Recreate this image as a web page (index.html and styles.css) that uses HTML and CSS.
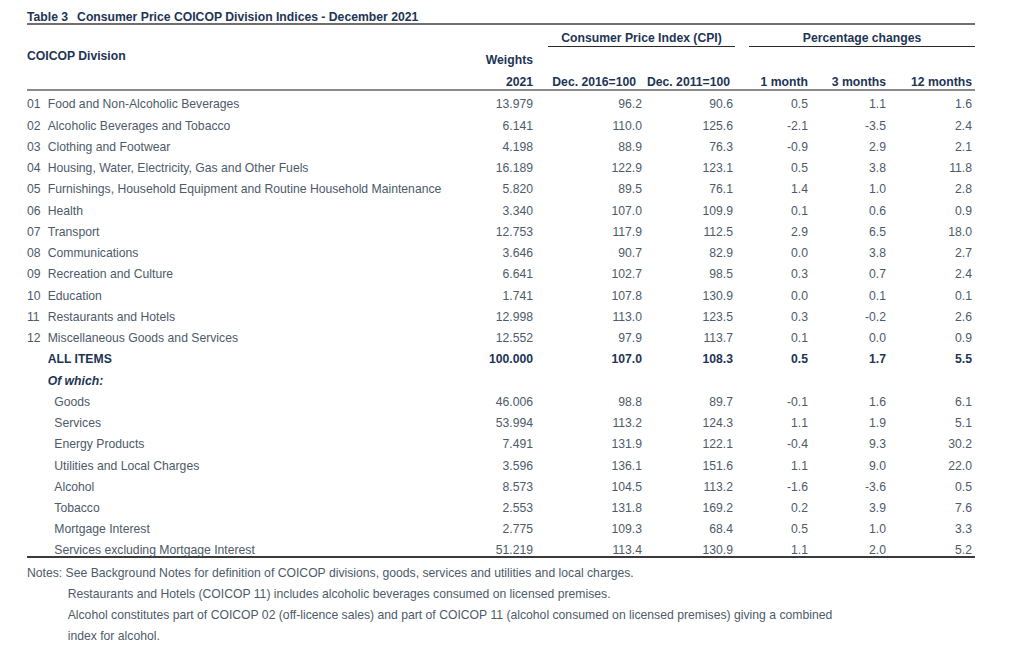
FILE: index.html
```html
<!DOCTYPE html>
<html lang="en">
<head>
<meta charset="utf-8">
<title>Table 3 Consumer Price COICOP Division Indices - December 2021</title>
<link rel="stylesheet" href="styles.css">
</head>
<body>
<div class="page">
  <div class="title">Table 3<span class="gap"></span>Consumer Price COICOP Division Indices - December 2021</div>
  <table class="cpi">
    <colgroup>
      <col class="c-label">
      <col class="c-w">
      <col class="c-d16">
      <col class="c-d11">
      <col class="c-m1">
      <col class="c-m3">
      <col class="c-m12">
    </colgroup>
    <thead>
      <tr class="hr-a">
        <th></th>
        <th></th>
        <th colspan="2"><span class="grp grp-cpi">Consumer Price Index (CPI)</span></th>
        <th colspan="3"><span class="grp grp-pct">Percentage changes</span></th>
      </tr>
      <tr class="hr-b">
        <th class="lbl-head">COICOP Division</th>
        <th class="num w-head">Weights</th>
        <th></th><th></th><th></th><th></th><th></th>
      </tr>
      <tr class="hr-c">
        <th></th>
        <th class="num">2021</th>
        <th class="num d16">Dec. 2016=100</th>
        <th class="num d11">Dec. 2011=100</th>
        <th class="num">1 month</th>
        <th class="num">3 months</th>
        <th class="num last">12 months</th>
      </tr>
    </thead>
    <tbody>
      <tr class="first"><td><span class="code">01</span>Food and Non-Alcoholic Beverages</td><td>13.979</td><td>96.2</td><td>90.6</td><td>0.5</td><td>1.1</td><td>1.6</td></tr>
      <tr><td><span class="code">02</span>Alcoholic Beverages and Tobacco</td><td>6.141</td><td>110.0</td><td>125.6</td><td>-2.1</td><td>-3.5</td><td>2.4</td></tr>
      <tr><td><span class="code">03</span>Clothing and Footwear</td><td>4.198</td><td>88.9</td><td>76.3</td><td>-0.9</td><td>2.9</td><td>2.1</td></tr>
      <tr><td><span class="code">04</span>Housing, Water, Electricity, Gas and Other Fuels</td><td>16.189</td><td>122.9</td><td>123.1</td><td>0.5</td><td>3.8</td><td>11.8</td></tr>
      <tr><td><span class="code">05</span>Furnishings, Household Equipment and Routine Household Maintenance</td><td>5.820</td><td>89.5</td><td>76.1</td><td>1.4</td><td>1.0</td><td>2.8</td></tr>
      <tr><td><span class="code">06</span>Health</td><td>3.340</td><td>107.0</td><td>109.9</td><td>0.1</td><td>0.6</td><td>0.9</td></tr>
      <tr><td><span class="code">07</span>Transport</td><td>12.753</td><td>117.9</td><td>112.5</td><td>2.9</td><td>6.5</td><td>18.0</td></tr>
      <tr><td><span class="code">08</span>Communications</td><td>3.646</td><td>90.7</td><td>82.9</td><td>0.0</td><td>3.8</td><td>2.7</td></tr>
      <tr><td><span class="code">09</span>Recreation and Culture</td><td>6.641</td><td>102.7</td><td>98.5</td><td>0.3</td><td>0.7</td><td>2.4</td></tr>
      <tr><td><span class="code">10</span>Education</td><td>1.741</td><td>107.8</td><td>130.9</td><td>0.0</td><td>0.1</td><td>0.1</td></tr>
      <tr><td><span class="code">11</span>Restaurants and Hotels</td><td>12.998</td><td>113.0</td><td>123.5</td><td>0.3</td><td>-0.2</td><td>2.6</td></tr>
      <tr><td><span class="code">12</span>Miscellaneous Goods and Services</td><td>12.552</td><td>97.9</td><td>113.7</td><td>0.1</td><td>0.0</td><td>0.9</td></tr>
      <tr class="total"><td class="ind">ALL ITEMS</td><td>100.000</td><td>107.0</td><td>108.3</td><td>0.5</td><td>1.7</td><td>5.5</td></tr>
      <tr class="ofwhich"><td class="ind">Of which:</td><td></td><td></td><td></td><td></td><td></td><td></td></tr>
      <tr><td class="sub">Goods</td><td>46.006</td><td>98.8</td><td>89.7</td><td>-0.1</td><td>1.6</td><td>6.1</td></tr>
      <tr><td class="sub">Services</td><td>53.994</td><td>113.2</td><td>124.3</td><td>1.1</td><td>1.9</td><td>5.1</td></tr>
      <tr><td class="sub">Energy Products</td><td>7.491</td><td>131.9</td><td>122.1</td><td>-0.4</td><td>9.3</td><td>30.2</td></tr>
      <tr><td class="sub">Utilities and Local Charges</td><td>3.596</td><td>136.1</td><td>151.6</td><td>1.1</td><td>9.0</td><td>22.0</td></tr>
      <tr><td class="sub">Alcohol</td><td>8.573</td><td>104.5</td><td>113.2</td><td>-1.6</td><td>-3.6</td><td>0.5</td></tr>
      <tr><td class="sub">Tobacco</td><td>2.553</td><td>131.8</td><td>169.2</td><td>0.2</td><td>3.9</td><td>7.6</td></tr>
      <tr><td class="sub">Mortgage Interest</td><td>2.775</td><td>109.3</td><td>68.4</td><td>0.5</td><td>1.0</td><td>3.3</td></tr>
      <tr class="lastrow"><td class="sub">Services excluding Mortgage Interest</td><td>51.219</td><td>113.4</td><td>130.9</td><td>1.1</td><td>2.0</td><td>5.2</td></tr>
    </tbody>
  </table>
  <div class="notes">
    <p class="note-first">Notes: See Background Notes for definition of COICOP divisions, goods, services and utilities and local charges.</p>
    <p class="note">Restaurants and Hotels (COICOP 11) includes alcoholic beverages consumed on licensed premises.</p>
    <p class="note">Alcohol constitutes part of COICOP 02 (off-licence sales) and part of COICOP 11 (alcohol consumed on licensed premises) giving a combined<br>index for alcohol.</p>
  </div>
</div>
</body>
</html>
```

FILE: styles.css
```css
html, body {
  margin: 0;
  padding: 0;
  background: #ffffff;
}

body {
  font-family: "Liberation Sans", Arial, sans-serif;
  font-size: 12.2px;
  color: #4d5a69;
}

.page {
  padding-left: 27px;
  width: 948px;
}

.title {
  padding-top: 11px;
  line-height: 12px;
  font-weight: bold;
  color: #1d3454;
  border-bottom: 2px solid #6f6f6f;
}

.title .gap {
  display: inline-block;
  width: 9px;
}

.cpi {
  width: 948px;
  table-layout: fixed;
  border-collapse: separate;
  border-spacing: 0;
}

.c-label { width: 433px; }
.c-w { width: 73px; }
.c-d16 { width: 109px; }
.c-d11 { width: 91px; }
.c-m1 { width: 75px; }
.c-m3 { width: 78px; }
.c-m12 { width: 89px; }

.cpi th {
  padding: 0;
  font-weight: bold;
  color: #1d3454;
  text-align: left;
  white-space: nowrap;
  vertical-align: top;
}

.cpi th.num { text-align: right; }

.hr-a { height: 22px; }

.grp {
  display: block;
  margin-top: 5px;
  line-height: 16px;
  text-align: center;
  border-bottom: 1px solid #2b2b2b;
}

.grp-cpi { margin-left: 15px; margin-right: -2px; }
.grp-pct { margin-left: 16px; margin-right: 0; }

.hr-b { height: 23px; }

.hr-b th { line-height: 16px; }

.hr-b .lbl-head { padding-top: 1px; }
.hr-b .w-head { padding-top: 5px; }

.hr-c th {
  padding-top: 5px;
  line-height: 14px;
  border-bottom: 2px solid #8a8a8a;
}

.hr-c th.d16 { padding-right: 6px; }
.hr-c th.d11 { padding-right: 3px; }
.hr-c th.last { padding-right: 3px; }

.cpi td {
  padding: 0;
  line-height: 21.25px;
  text-align: right;
  white-space: nowrap;
}

.cpi td:first-child { text-align: left; }
.cpi td:last-child { padding-right: 3px; }

.cpi tr.first td { padding-top: 3.4px; }

.code {
  display: inline-block;
  width: 20.7px;
}

.ind { padding-left: 20.7px !important; }
.sub { padding-left: 27.3px !important; }

.total td {
  font-weight: bold;
  color: #1d3454;
}

.ofwhich td {
  font-weight: bold;
  font-style: italic;
  color: #1d3454;
}

.cpi tr.lastrow td {
  padding-top: 3px;
  line-height: 12px;
  border-bottom: 2px solid #3a3a3a;
}

.notes {
  margin-top: 5px;
}

.notes p {
  margin: 0;
  line-height: 21px;
}

.notes .note {
  padding-left: 40.7px;
}
```
